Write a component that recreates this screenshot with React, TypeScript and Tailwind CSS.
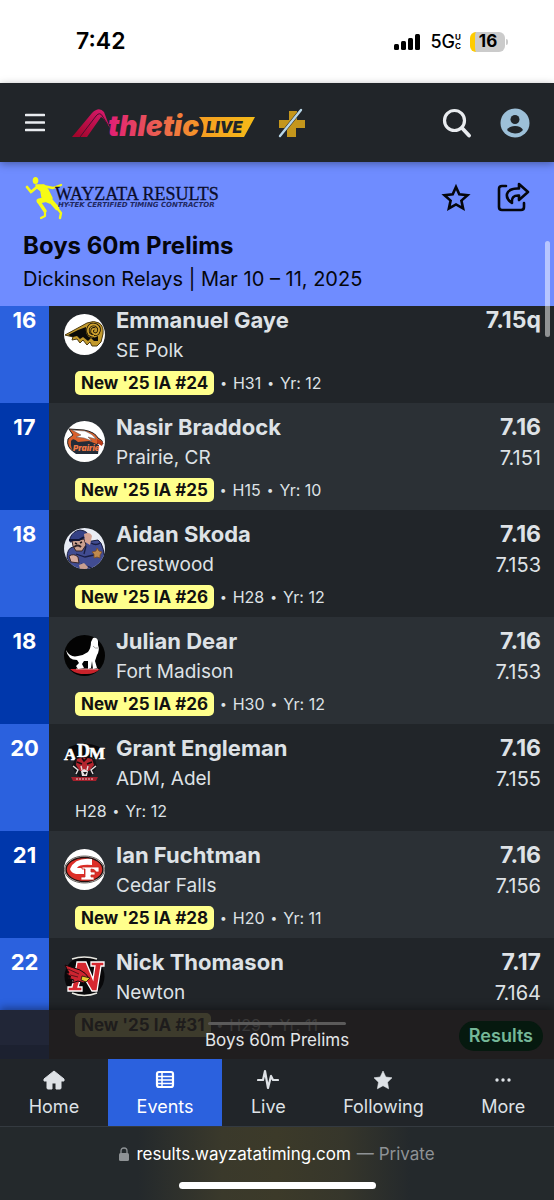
import React from 'react';
import { clsx } from 'clsx';

interface Result {
  rank: number;
  name: string;
  school: string;
  mark: string;
  exact?: string;
  badge?: string;
  heat: string;
  year: string;
  logo: React.ReactNode;
}

const RamLogo = () => (
  <svg viewBox="0 0 41 41" className="size-full">
    <circle cx="20.5" cy="20.5" r="20.5" fill="#fff" />
    <path d="M1 21 L12 15 L23 9 Q30 6 35 9 Q40 12 39 20 L37 28 L33 32 L28 32 L26 28 L23 31 L19 26 L16 29 L13 25 L8 26 L9 23 Z" fill="#c39a2c" stroke="#4b3a10" strokeWidth="1" />
    <path d="M4 21 L14 16 L22 13 Q21 20 25 23 Q30 25 34 22 L34 27 L30 27 L27 24 L24 27 L19 23 L16 25 L13 22 L9 23 Z" fill="#0b0b08" />
    <path d="M30 22 Q23 22 24 15 Q26 9 32 11 Q37 14 34 19 Q31 22 28 18 Q28 14 31 15" fill="none" stroke="#0f0c04" strokeWidth="3.4" />
    <path d="M30 22 Q23 22 24 15 Q26 9 32 11 Q37 14 34 19 Q31 22 28 18 Q28 14 31 15" fill="none" stroke="#d1a32e" strokeWidth="1.8" />
  </svg>
);

const HawkLogo = () => (
  <svg viewBox="0 0 41 41" className="size-full">
    <circle cx="20.5" cy="20.5" r="20.5" fill="#fff" />
    <path d="M5 8 L20 9 Q31 11 34 17 Q39 19 39 23 L34 22 L30 27 L10 31 Q2 26 4 18 L9 14 Z" fill="#d9602b" stroke="#222" strokeWidth="1" />
    <path d="M8 9 L21 10 Q29 13 32 18 L24 16 L28 20 L20 17 L12 16 L17 14Z" fill="#fff" stroke="#555" strokeWidth=".5" />
    <path d="M7 20 Q9 16 14 21 L25 20 L35 24 L34 33 L12 33 Q6 29 7 20Z" fill="#242c38" />
    <path d="M33 18 L39 21 L38 25 L33 22Z" fill="#b93b1c" />
    <text x="9" y="30" fontSize="8" fontWeight="900" fontStyle="italic" fontFamily="Inter, sans-serif" fill="#ef7844">Prairie</text>
  </svg>
);

const CadetLogo = () => (
  <svg viewBox="0 0 41 41" className="size-full">
    <defs>
      <clipPath id="cadet"><circle cx="20.5" cy="20.5" r="20.5" /></clipPath>
    </defs>
    <g clipPath="url(#cadet)">
      <rect width="41" height="41" fill="#e9edf5" />
      <path d="M3 30 Q3 20 9 19 L22 14 L34 12 Q41 16 41 41 L10 41Z" fill="#414c91" stroke="#191d3f" />
      <path d="M6 10 Q9 3 16 2 Q25 3 25 10 L18 12 L6 14Z" fill="#354185" stroke="#191d3f" />
      <path d="M8 13 L20 11 L22 17 L18 23 L12 23 L9 18Z" fill="#cba08f" stroke="#382629" />
      <path d="M20 6 Q26 3 28 8 L26 17 L21 14Z" fill="#d3a293" />
      <path d="M5 12 L15 12 L20 9" fill="none" stroke="#111636" strokeWidth="2" />
      <path d="M11 15 L13 16 M16 15 L18 14" stroke="#1c1519" strokeWidth="1.4" />
      <path d="M10 19 Q14 16 17 19" fill="none" stroke="#2d2025" strokeWidth="2" />
      <path d="M5 28 Q10 25 14 29 L15 35 L7 34Z" fill="#d7aca0" stroke="#382629" />
      <path d="M12 26 L21 29 L30 27 M22 18 L20 26 M17 36 L28 40 M27 15 Q32 18 36 15" fill="none" stroke="#181d43" strokeWidth="1.3" />
      <path d="M33 20 L35 23 L38 24 L36 27 L36 30 L33 29 L30 30 L30 26 L28 24 L32 23Z" fill="#c08a4e" stroke="#7a4d27" strokeWidth=".8" />
      <path d="M15 37 L20 35 L24 39 L23 41 L16 41Z" fill="#c99f90" />
    </g>
  </svg>
);

const HoundLogo = () => (
  <svg viewBox="0 0 41 41" className="size-full">
    <circle cx="20.5" cy="20.5" r="20.5" fill="#030303" />
    <path d="M6 34 H36 Q31 39 23 39 H17 Q10 38 6 34Z" fill="#c9232b" />
    <path d="M12 34 H34" stroke="#e9a9a9" strokeWidth="1" />
    <path d="M2 15 Q6 23 14 21 Q20 20 24 17 Q27 13 27 7 L29 3 Q33 2 34 6 L34 10 Q36 15 33 20 L31 26 L33 33 L29 34 L28 26 L27 33 L24 34 L24 26 L20 26 L18 29 L20 33 L14 34 L12 31 L15 28 L13 25 Q4 25 2 15Z" fill="#fff" />
    <path d="M29 11 Q31 14 34 13" fill="none" stroke="#999" strokeWidth=".9" />
  </svg>
);

const TigerLogo = () => (
  <svg viewBox="0 0 41 41" className="size-full overflow-visible">
    <path d="M0 18 L5 5 Q20 -2 36 5 L41 18 L31 16 H10Z" fill="#08080a" />
    <g fill="#fff" stroke="#fff" strokeWidth=".6" fontFamily="'Liberation Serif', serif" fontWeight="700">
      <text x="0" y="18" fontSize="17">A</text>
      <text x="13" y="15" fontSize="18">D</text>
      <text x="25" y="17" fontSize="17">M</text>
    </g>
    <path d="M11 17 L14 15 L20 17 L27 15 L31 17 L33 24 L29 32 L24 36 H17 L12 32 L8 24Z" fill="#131316" />
    <path d="M13 17 Q20 14 28 17 L30 23 L25 29 H16 L12 23Z" fill="#b4262f" />
    <path d="M13 20 L18 22 M28 20 L23 22 M18 16 L20 19 L23 16" stroke="#160c0e" strokeWidth="1.6" fill="none" />
    <path d="M9 24 L14 28 L12 32 M32 24 L27 28 L29 32 M17 24 L18 28 M24 24 L23 28" fill="none" stroke="#e4dedf" strokeWidth="1.4" />
    <path d="M17 29 L20 27 L24 29 L23 34 H18Z" fill="#e9e2e2" />
    <path d="M19 30 H23 L21 33Z" fill="#121212" />
    <path d="M7 35 H34 L32 39 H9Z" fill="#a3212c" />
    <path d="M12 37 H30" stroke="#f0c8c8" strokeWidth="1" strokeDasharray="2 1" />
  </svg>
);

const CedarFallsLogo = () => (
  <svg viewBox="0 0 41 41" className="size-full">
    <circle cx="20.5" cy="20.5" r="20.5" fill="#fff" />
    <ellipse cx="20.5" cy="20.5" rx="20" ry="13.5" fill="#d3d1cd" stroke="#6a6765" />
    <ellipse cx="20.5" cy="20.5" rx="18.4" ry="12" fill="#dc2e27" stroke="#211" strokeWidth="1.4" />
    <path d="M28 10 Q11 8 6 20 Q9 23 20 22 V19 H13 Q15 15 28 16Z" fill="#fff" />
    <path d="M6 20 Q7 24 12 25 H20 V22Z" fill="#fff" />
    <path d="M18 18 H35 V23 H32 Q31 20 27 20 V23 H31 V26 H27 V28 H30 V31 H17 V28 H21 V20 H18Z" fill="#fff" stroke="#c62820" strokeWidth=".8" />
  </svg>
);

const CardinalLogo = () => (
  <svg viewBox="0 0 41 41" className="size-full">
    <circle cx="20.5" cy="20.5" r="20" fill="#08080a" />
    <path d="M8 3 Q20 -1 33 3 M8 37 Q20 42 33 37" fill="none" stroke="#e9e9e2" strokeWidth="1.5" />
    <path d="M13 6 H22 L29 23 L31 10 H27 V6 H40 V10 H37 L33 35 H28 L18 18 L14 31 H18 V35 H4 V31 H8 L12 12Z" fill="#d72830" stroke="#fff" strokeWidth="1.3" />
    <path d="M1 9 L16 14 Q22 17 25 22 L20 27 L14 25 L8 27 L10 24 L4 22 L7 21 L2 17 L5 17 Z" fill="#cd2430" stroke="#16090b" strokeWidth="1" />
    <path d="M18 20 L26 22 L22 26 L17 24Z" fill="#e6cb32" stroke="#161005" strokeWidth=".8" />
    <path d="M4 13 L15 18 M6 19 L14 21" stroke="#59121a" strokeWidth="1" />
  </svg>
);

const results: Result[] = [
  { rank: 16, name: 'Emmanuel Gaye', school: 'SE Polk', mark: '7.15q', badge: "New '25 IA #24", heat: 'H31', year: '12', logo: <RamLogo /> },
  { rank: 17, name: 'Nasir Braddock', school: 'Prairie, CR', mark: '7.16', exact: '7.151', badge: "New '25 IA #25", heat: 'H15', year: '10', logo: <HawkLogo /> },
  { rank: 18, name: 'Aidan Skoda', school: 'Crestwood', mark: '7.16', exact: '7.153', badge: "New '25 IA #26", heat: 'H28', year: '12', logo: <CadetLogo /> },
  { rank: 18, name: 'Julian Dear', school: 'Fort Madison', mark: '7.16', exact: '7.153', badge: "New '25 IA #26", heat: 'H30', year: '12', logo: <HoundLogo /> },
  { rank: 20, name: 'Grant Engleman', school: 'ADM, Adel', mark: '7.16', exact: '7.155', heat: 'H28', year: '12', logo: <TigerLogo /> },
  { rank: 21, name: 'Ian Fuchtman', school: 'Cedar Falls', mark: '7.16', exact: '7.156', badge: "New '25 IA #28", heat: 'H20', year: '11', logo: <CedarFallsLogo /> },
  { rank: 22, name: 'Nick Thomason', school: 'Newton', mark: '7.17', exact: '7.164', badge: "New '25 IA #31", heat: 'H29', year: '11', logo: <CardinalLogo /> },
];

const StatusBar = () => (
  <div className="flex h-[83px] items-center justify-between bg-white pl-[76px] pr-[46px] text-black">
    <span className="text-[23px] font-semibold">7:42</span>
    <div className="flex items-center">
      <svg width="27" height="16" viewBox="0 0 27 16" aria-hidden="true">
        <rect x="0" y="10" width="5" height="6" rx="1.5" />
        <rect x="7" y="7" width="5" height="9" rx="1.5" />
        <rect x="14" y="4" width="5" height="12" rx="1.5" />
        <rect x="21" y="0" width="5" height="16" rx="1.5" />
      </svg>
      <span className="ml-[9px] text-[18px] font-medium">5G</span>
      <span className="flex flex-col text-[8px] leading-[9px] font-bold">
        <span>U</span>
        <span>C</span>
      </span>
      <span className="ml-[9px] flex h-5 w-[35px] items-center justify-center rounded-md border-l-[5px] border-[#fc0] bg-[#cbcbcb] pr-1 text-[17px] font-bold">16</span>
      <span className="ml-px h-1.5 w-0.5 rounded-r bg-[#cbcbcb]" />
    </div>
  </div>
);

const BrandLogo = () => (
  <svg width="184" height="32" viewBox="0 0 184 32" className="overflow-visible" role="img" aria-label="AthleticLIVE">
    <defs>
      <linearGradient id="brand" gradientUnits="userSpaceOnUse" x1="34" x2="128" y1="0" y2="0">
        <stop offset="0" stopColor="#e11a77" />
        <stop offset=".45" stopColor="#e8525a" />
        <stop offset="1" stopColor="#f69a25" />
      </linearGradient>
      <linearGradient id="arch" x1="0" x2="1" y1="1" y2="0">
        <stop offset=".1" stopColor="#a3062c" />
        <stop offset="1" stopColor="#dc1c72" />
      </linearGradient>
      <linearGradient id="live" x1="0" x2="1" y1="0" y2="0">
        <stop offset="0" stopColor="#f59d22" />
        <stop offset="1" stopColor="#f5bb18" />
      </linearGradient>
    </defs>
    <path d="M0 30 L20 6 Q27 -1 32 5 L38 21 Q31 10 29 10 L15 30Z" fill="url(#arch)" />
    <path d="M8 30 L24 9 Q28 4 31 10 L36 18" fill="none" stroke="#4a1030" strokeWidth="1" />
    <text x="36" y="29" fontFamily="Inter, sans-serif" fontSize="28" fontWeight="900" fontStyle="italic" fill="url(#brand)">thletic</text>
    <path d="M127 10 H183 L172 30 H129 Q135 18 127 10Z" fill="url(#live)" />
    <text x="134" y="26" fontFamily="Inter, sans-serif" fontSize="16" fontWeight="900" fontStyle="italic" fill="#212529">LIVE</text>
  </svg>
);

const NavBar = () => (
  <header className="relative z-20 flex h-[79px] items-center bg-[#212529] pr-6 pl-[25px] shadow-[0_2px_8px_rgba(0,0,0,0.35)]">
    <button type="button" aria-label="Menu" className="text-[#e9ecef]">
      <svg width="20" height="20" viewBox="0 0 20 20" stroke="currentColor" strokeWidth="2.6" strokeLinecap="round">
        <path d="M1 2 H19 M1 9.5 H19 M1 17 H19" />
      </svg>
    </button>
    <a href="#home" className="ml-[27px]"><BrandLogo /></a>
    <button type="button" aria-label="Subscription" className="ml-[22px]">
      <svg width="28" height="30" viewBox="0 0 28 30">
        <path d="M11 3 H19 V12 H27 V20 H18 V29 H9 V20 H1 V12 H11Z" fill="#c4961c" />
        <path d="M2 28 L23 2" stroke="#212529" strokeWidth="3.4" />
        <path d="M2 28 L23 2" stroke="#b9d7e8" strokeWidth="2.4" strokeLinecap="round" />
      </svg>
    </button>
    <button type="button" aria-label="Search" className="ml-auto text-[#e9ecef]">
      <svg width="30" height="30" viewBox="0 0 30 30" fill="none" stroke="currentColor" strokeLinecap="round">
        <circle cx="12.5" cy="12.5" r="10" strokeWidth="3.2" />
        <path d="M20 20 L27 27.5" strokeWidth="3.8" />
      </svg>
    </button>
    <button type="button" aria-label="Account" className="ml-7">
      <svg width="30" height="30" viewBox="0 0 30 30">
        <circle cx="15" cy="15" r="14.5" fill="#9dc0d8" />
        <circle cx="15" cy="11.5" r="4.5" fill="#212529" />
        <path d="M7 22 Q9 18 15 18 Q21 18 23 22 Q20 25.5 15 25.5 Q10 25.5 7 22Z" fill="#212529" />
      </svg>
    </button>
  </header>
);

const WayzataLogo = () => (
  <svg width="200" height="46" viewBox="0 0 200 46" className="overflow-visible" role="img" aria-label="Wayzata Results">
    <g fill="none" stroke="#f6fb15" strokeLinecap="round" strokeLinejoin="round">
      <ellipse cx="12.5" cy="5.5" rx="2.8" ry="3.6" fill="#f6fb15" stroke="none" />
      <path d="M13 10 L21 10 L25 15 L29 23 L27 28 L22 26 L19 22 L18 16 L14 13Z" fill="#f6fb15" strokeWidth="1.5" />
      <path d="M14 12 L8 17 L4 12" strokeWidth="2.8" />
      <path d="M20 11 L30 13 L38 10" strokeWidth="2.4" />
      <path d="M25 24 L16 26" strokeWidth="5" />
      <path d="M16 27 L22 36" strokeWidth="3.4" />
      <path d="M22 36 L22 41 L18 43" strokeWidth="2.2" />
      <path d="M27 25 L34 33" strokeWidth="4.4" />
      <path d="M34 33 L38 38 L37 43" strokeWidth="2.4" />
    </g>
    <text x="32" y="25" fontFamily="'Liberation Serif', serif" fontSize="18" fill="#0b0d2a" stroke="#0b0d2a" strokeWidth=".3">WAYZATA RESULTS</text>
    <text x="35" y="32" fontFamily="'DejaVu Sans', sans-serif" fontSize="7" fontWeight="700" fontStyle="italic" fill="#20285f">HY-TEK CERTIFIED TIMING CONTRACTOR</text>
  </svg>
);

const EventHeader = () => (
  <section className="relative z-10 h-36 bg-[#6f8cff] pt-[13px] pr-6 pl-[23px] text-[#05060c]">
    <div className="flex items-center justify-between">
      <WayzataLogo />
      <div className="flex items-center gap-[26px]">
        <button type="button" aria-label="Follow event">
          <svg width="30" height="30" viewBox="0 0 30 30" fill="none" stroke="currentColor" strokeWidth="2.6">
            <path d="M15 4 L18.3 11.4 L26.5 12.2 L20.4 17.6 L22.1 25.5 L15 21.4 L7.9 25.5 L9.6 17.6 L3.5 12.2 L11.7 11.4Z" />
          </svg>
        </button>
        <button type="button" aria-label="Share">
          <svg width="33" height="32" viewBox="0 0 33 32" fill="none" stroke="currentColor" strokeWidth="2.6" strokeLinejoin="round" strokeLinecap="round">
            <path d="M9 4 H5 Q2 4 2 7 V25 Q2 28 5 28 H24 Q27 28 27 25 V21" />
            <path d="M22 2 L31 10 L22 18 V13.5 Q14 13 15 21 Q9 17 10 12 Q12 6 22 6.5Z" />
          </svg>
        </button>
      </div>
    </div>
    <h1 className="mt-[9px] text-[24px] leading-8 font-bold">Boys 60m Prelims</h1>
    <p className="mt-px text-[20px] leading-8">Dickinson Relays | Mar 10 – 11, 2025</p>
    <div className="absolute top-[79px] right-1 h-24 w-[5px] rounded-full bg-white/50" />
  </section>
);

const ResultRow = ({ result, alt }: { result: Result; alt: boolean }) => (
  <tr className={clsx('h-[107px] align-top text-[#dee2e6]', alt ? 'bg-[#2b3035]' : 'bg-[#212529]')}>
    <th scope="row" className={clsx('w-[49px] pt-2 text-center text-[22px] leading-8 font-bold text-white', alt ? 'bg-[#0037ab]' : 'bg-[#2b61de]')}>
      {result.rank}
    </th>
    <td className="pt-2 pl-[15px]">
      <div className="flex gap-[11px]">
        <div className="mt-2.5 size-[41px] shrink-0">{result.logo}</div>
        <div>
          <a href="#athlete" className="block text-[22px] leading-8 font-bold">{result.name}</a>
          <a href="#team" className="block text-[19px] leading-[30px]">{result.school}</a>
        </div>
      </div>
      <div className="mt-1 ml-[11px] flex h-[26px] items-center gap-1.5 text-[16px]">
        {result.badge && (
          <>
            <span className="rounded-[5px] bg-[#ffff8c] px-1.5 text-[17px] leading-6 font-bold text-[#111]">{result.badge}</span>
            <span className="text-[12px]">•</span>
          </>
        )}
        <span>{result.heat}</span>
        <span className="text-[12px]">•</span>
        <span>Yr: {result.year}</span>
      </div>
    </td>
    <td className="pt-2 pr-[13px] text-right">
      <div className="text-[23px] leading-8 font-bold">{result.mark}</div>
      <div className="text-[20px] leading-[30px]">{result.exact}</div>
    </td>
  </tr>
);

const EventStrip = () => (
  <div className="absolute inset-x-0 bottom-0 flex h-[49px] flex-col items-center bg-[#201e1e]/87 pt-3 shadow-[0_-2px_8px_rgba(0,0,0,0.4)]">
    <div className="h-[3px] w-[138px] rounded-full bg-[#5b5a5a]" />
    <span className="mt-[3px] text-[17px] leading-6 text-[#e4e6e8]">Boys 60m Prelims</span>
    <span className="absolute top-[11px] right-[11px] rounded-full bg-[#06190f] px-2.5 text-[18px] leading-[30px] font-semibold text-[#75b798]">Results</span>
  </div>
);

const tabs = [
  {
    label: 'Home',
    icon: <path d="M11 2 L21 10 V12 H18 V19 Q18 20 17 20 H13 V14 H9 V20 H5 Q4 20 4 19 V12 H1 V10Z" fill="currentColor" stroke="currentColor" strokeLinejoin="round" />,
  },
  {
    label: 'Events',
    icon: (
      <g fill="none" stroke="currentColor" strokeWidth="2.2">
        <rect x="3" y="3" width="16" height="15" rx="2" />
        <path d="M8 3 V18 M3 7.5 H19 M3 11 H19 M3 14.5 H19" strokeWidth="1.5" />
      </g>
    ),
  },
  {
    label: 'Live',
    icon: <path d="M1 11 H6 L8 7 L11 19 L14 2 L16 11 H21" fill="none" stroke="currentColor" strokeWidth="2.2" strokeLinejoin="round" strokeLinecap="round" transform="translate(22 0) scale(-1 1)" />,
  },
  {
    label: 'Following',
    icon: <path d="M11 2 L13.8 8 L20 8.8 L15.5 13.2 L16.6 19.8 L11 16.7 L5.4 19.8 L6.5 13.2 L2 8.8 L8.2 8Z" fill="currentColor" stroke="currentColor" strokeWidth=".6" strokeLinejoin="round" />,
  },
  {
    label: 'More',
    icon: (
      <g fill="currentColor">
        <circle cx="5" cy="11" r="1.7" />
        <circle cx="11" cy="11" r="1.7" />
        <circle cx="17" cy="11" r="1.7" />
      </g>
    ),
  },
];

const TabBar = () => (
  <nav className="flex h-[68px] border-b border-[#343a40] bg-[#212529] text-[#dee2e6]">
    {tabs.map((tab) => (
      <a
        key={tab.label}
        href="#tab"
        className={clsx('flex flex-auto flex-col items-center pt-2.5', tab.label === 'Events' && 'bg-[#2b61de] text-white')}
      >
        <svg width="22" height="22" viewBox="0 0 22 22" aria-hidden="true">{tab.icon}</svg>
        <span className="mt-1 text-[18px] leading-6">{tab.label}</span>
      </a>
    ))}
  </nav>
);

const AddressBar = () => (
  <footer className="flex h-[73px] flex-col items-center bg-[linear-gradient(to_right,#24292c_25%,#3a392b_40%,#3c3a29_50%,#36362b_62%,#24292c_74%)] pt-[15px]">
    <div className="flex items-center text-[17px] leading-6 text-[#8e9295]">
      <svg width="10" height="14" viewBox="0 0 10 14" aria-hidden="true">
        <rect y="6" width="10" height="8" rx="1.5" fill="currentColor" />
        <path d="M2 7 V4 Q2 1 5 1 Q8 1 8 4 V7" fill="none" stroke="currentColor" strokeWidth="1.3" />
      </svg>
      <span className="ml-[7px] text-white">results.wayzatatiming.com</span>
      <span className="ml-1.5">— Private</span>
    </div>
    <div className="mt-4 h-[7px] w-[197px] rounded-full bg-white" />
  </footer>
);

export default function App() {
  return (
    <div className="flex min-h-screen flex-col bg-[#212529] font-['Inter',sans-serif]">
      <StatusBar />
      <NavBar />
      <EventHeader />
      <main className="relative flex-1 overflow-hidden">
        <table className="-mt-2.5 w-full border-collapse">
          <tbody>
            {results.map((result, i) => (
              <ResultRow key={result.name} result={result} alt={i % 2 === 1} />
            ))}
          </tbody>
        </table>
        <div className="h-3.5 w-[49px] bg-[#0037ab]" />
        <EventStrip />
      </main>
      <TabBar />
      <AddressBar />
    </div>
  );
}
